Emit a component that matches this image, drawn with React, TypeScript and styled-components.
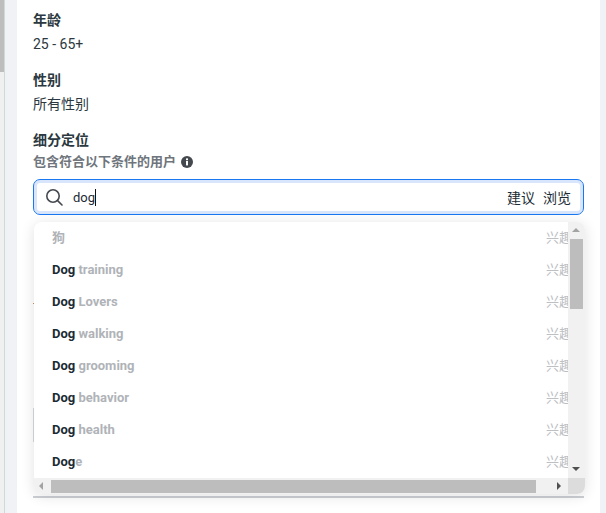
import styled, { createGlobalStyle } from "styled-components";

const Global = createGlobalStyle`
  html, body {
    margin: 0;
    height: 513px;
    overflow: hidden;
    background: #fff;
    font-family: Roboto, "Noto Sans CJK SC", sans-serif;
    color: #1c2b33;
  }
`;

const Page = styled.div`
  display: flex;
  width: 606px;
  height: 513px;
  background: #f0f2f5;
`;

const PageScroll = styled.div`
  width: 4px;
  height: 513px;
  background: #f0f0f0;
  border-right: 1px solid #d3d6db;
  &::before {
    content: "";
    display: block;
    width: 4px;
    height: 72px;
    background: #bdbdbd;
  }
`;

const Panel = styled.div`
  width: 583px;
  margin-left: 12px;
  padding: 10px 16px 0;
  box-sizing: border-box;
  background: #fff;
`;

const Group = styled.div`
  margin-bottom: 16px;
`;

const Title = styled.div`
  font-size: 14px;
  line-height: 20px;
  font-weight: 700;
  color: #2b3840;
`;

const Value = styled.div`
  margin-top: 4px;
  font-size: 14px;
  line-height: 20px;
  color: #2b3840;
`;

const Hint = styled.div`
  display: flex;
  align-items: center;
  gap: 5px;
  margin-top: 2px;
  font-size: 13px;
  line-height: 20px;
  font-weight: 700;
  color: #6f757c;
`;

const Field = styled.div`
  display: flex;
  align-items: center;
  width: 551px;
  height: 36px;
  margin-top: 7px;
  padding: 0 12px 0 11px;
  box-sizing: border-box;
  background: #fff;
  border: 1px solid #1877f2;
  border-radius: 7px;
  box-shadow: inset 0 0 0 3px #d8e5fa;
  font-size: 14px;
`;

const Query = styled.span`
  margin-left: 10px;
  border-right: 1px solid #111;
  font-size: 13px;
  line-height: 17px;
  color: #1c2b33;
`;

const Actions = styled.div`
  display: flex;
  gap: 8px;
  margin-left: auto;
  color: #1c2b33;
`;

const Behind = styled.div`
  position: relative;
  width: 551px;
  height: 283px;
  box-sizing: border-box;
  border-bottom: 2px solid #ccd0d5;
`;

const Tick = styled.div`
  position: absolute;
  left: 0;
  top: 88px;
  width: 2px;
  height: 1px;
  background: #c98a5a;
`;

const Edge = styled.div`
  position: absolute;
  left: 0;
  top: 193px;
  width: 1px;
  height: 34px;
  background: #d6d8db;
`;

const Dropdown = styled.div`
  position: absolute;
  left: 1px;
  top: 7px;
  display: grid;
  grid-template-columns: 534px 17px;
  grid-template-rows: 256px 16px;
  width: 551px;
  border-radius: 8px;
  overflow: hidden;
  background: #fff;
  box-shadow: 0 2px 14px rgba(0, 0, 0, 0.12);
`;

const List = styled.div`
  overflow: hidden;
`;

const Row = styled.div`
  display: flex;
  align-items: center;
  height: 32px;
  padding-left: 18px;
  font-size: 13px;
  line-height: 16px;
  font-weight: 700;
  color: #b0b3b8;
`;

const Name = styled.div`
  flex: 1;
`;

const Match = styled.span`
  color: #1c2b33;
`;

const Kind = styled.div`
  width: 22px;
  overflow: hidden;
  white-space: nowrap;
  font-weight: 400;
  color: #bcc0c4;
`;

const VTrack = styled.div`
  position: relative;
  background: #f1f1f1;
`;

const VThumb = styled.div`
  position: absolute;
  left: 2px;
  top: 17px;
  width: 13px;
  height: 70px;
  background: #bdbdbd;
`;

const HTrack = styled.div`
  position: relative;
  background: #f1f1f1;
`;

const HThumb = styled.div`
  position: absolute;
  left: 17px;
  top: 2px;
  width: 485px;
  height: 13px;
  background: #bdbdbd;
`;

const Corner = styled.div`
  background: #dcdcdc;
`;

const Arrow = styled.div<{ $dir: "up" | "down" | "left" | "right"; $dim?: boolean }>`
  position: absolute;
  width: 0;
  height: 0;
  border: 4px solid transparent;
  ${(p) => {
    const c = p.$dim ? "#a3a3a3" : "#505050";
    if (p.$dir === "up") return `top:6px;left:4px;border-top:0;border-bottom-color:${c};`;
    if (p.$dir === "down") return `bottom:7px;left:4px;border-bottom:0;border-top-color:${c};`;
    if (p.$dir === "left") return `left:5px;top:4px;border-left:0;border-right-color:${c};`;
    return `right:7px;top:4px;border-right:0;border-left-color:${c};`;
  }}
`;

const rows: [string, string][] = [
  ["", "狗"],
  ["Dog", " training"],
  ["Dog", " Lovers"],
  ["Dog", " walking"],
  ["Dog", " grooming"],
  ["Dog", " behavior"],
  ["Dog", " health"],
  ["Dog", "e"],
];

const SearchIcon = () => (
  <svg width="18" height="18" viewBox="0 0 18 18" fill="none" stroke="#444950" strokeWidth="1.6">
    <circle cx="8" cy="8" r="6.2" />
    <path d="M12.6 12.6 L17 17" strokeLinecap="round" />
  </svg>
);

const InfoIcon = () => (
  <svg width="12" height="12" viewBox="0 0 12 12">
    <circle cx="6" cy="6" r="6" fill="#444950" />
    <rect x="5" y="5" width="2" height="4.4" fill="#fff" />
    <rect x="5" y="2.4" width="2" height="1.8" fill="#fff" />
  </svg>
);

const App = () => (
  <Page>
    <Global />
    <PageScroll />
    <Panel>
      <Group>
        <Title>年龄</Title>
        <Value>25 - 65+</Value>
      </Group>
      <Group>
        <Title>性别</Title>
        <Value>所有性别</Value>
      </Group>
      <Title>细分定位</Title>
      <Hint>
        包含符合以下条件的用户
        <InfoIcon />
      </Hint>
      <Field>
        <SearchIcon />
        <Query>dog</Query>
        <Actions>
          <span>建议</span>
          <span>浏览</span>
        </Actions>
      </Field>
      <Behind>
        <Tick />
        <Edge />
        <Dropdown>
          <List>
            {rows.map(([match, rest]) => (
              <Row key={match + rest}>
                <Name>
                  <Match>{match}</Match>
                  {rest}
                </Name>
                <Kind>兴趣</Kind>
              </Row>
            ))}
          </List>
          <VTrack>
            <Arrow $dir="up" $dim />
            <VThumb />
            <Arrow $dir="down" />
          </VTrack>
          <HTrack>
            <Arrow $dir="left" $dim />
            <HThumb />
            <Arrow $dir="right" />
          </HTrack>
          <Corner />
        </Dropdown>
      </Behind>
    </Panel>
  </Page>
);

export default App;
